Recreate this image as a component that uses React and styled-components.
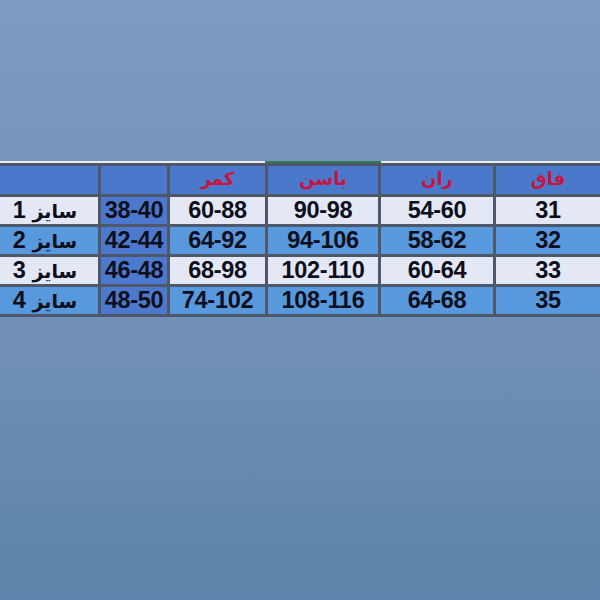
import React from 'react'
import styled, { createGlobalStyle } from 'styled-components'

const GlobalStyle = createGlobalStyle`
    html, body {
        margin: 0;
        padding: 0;
    }
    body {
        font-family: "Liberation Sans", "DejaVu Sans", Arial, sans-serif;
    }
`

const COLS = '98px 66px 95px 110px 112px 1fr'

const Page = styled.div`
    width: 600px;
    height: 600px;
    box-sizing: border-box;
    padding-top: 161px;
    background: linear-gradient(180deg, #7e9bc2 0%, #7593bb 45%, #5c83a9 100%);
    overflow: hidden;
`

const TopLine = styled.div`
    display: grid;
    grid-template-columns: ${COLS};
    column-gap: 3px;
    height: 2px;
    background-color: #e9eef6;
`

const TopSeg = styled.div`
    background-color: ${(p) => (p.$active ? '#2f7a57' : '#e9eef6')};
    margin: ${(p) => (p.$active ? '0 -3px' : '0')};
`

const Sheet = styled.div`
    display: grid;
    grid-template-columns: ${COLS};
    grid-template-rows: 28px repeat(4, 27px);
    gap: 3px;
    padding: 3px 0;
    background-color: #4f5868;
`

const HeadCell = styled.div`
    background-color: #4a78cb;
    display: flex;
    align-items: center;
    justify-content: center;
    color: #c8143f;
    font-family: "DejaVu Sans", sans-serif;
    font-size: 18px;
    font-weight: bold;
    padding-bottom: 3px;
`

const rowColors = {
    light: '#e4e8f4',
    blue: '#5898dc',
}

const Cell = styled.div`
    background-color: ${(p) => (p.$range ? '#4c79ce' : rowColors[p.$tone])};
    display: flex;
    align-items: center;
    justify-content: center;
    color: #0e0f1c;
    font-size: 23.5px;
    font-weight: bold;
    letter-spacing: -0.3px;
`

const SizeLabel = styled.span`
    direction: rtl;
    unicode-bidi: isolate;
    font-family: "DejaVu Sans", sans-serif;
    font-size: 19px;
    font-weight: bold;
    margin-left: -8px;

    b {
        font-family: "Liberation Sans", Arial, sans-serif;
        font-size: 23.5px;
    }
`

const headers = ['', '', 'كمر', 'باسن', 'ران', 'فاق']

const rows = [
    { size: 1, chest: '38-40', waist: '60-88', hip: '90-98', thigh: '54-60', leg: '31' },
    { size: 2, chest: '42-44', waist: '64-92', hip: '94-106', thigh: '58-62', leg: '32' },
    { size: 3, chest: '46-48', waist: '68-98', hip: '102-110', thigh: '60-64', leg: '33' },
    { size: 4, chest: '48-50', waist: '74-102', hip: '108-116', thigh: '64-68', leg: '35' },
]

export default function App() {
    return (
        <>
            <GlobalStyle />
            <Page>
                <TopLine>
                    {headers.map((h, i) => (
                        <TopSeg key={i} $active={i === 3} />
                    ))}
                </TopLine>
                <Sheet>
                    {headers.map((h, i) => (
                        <HeadCell key={'h' + i}>{h}</HeadCell>
                    ))}
                    {rows.map((r, i) => {
                        const tone = i % 2 === 0 ? 'light' : 'blue'
                        return (
                            <React.Fragment key={r.size}>
                                <Cell $tone={tone}>
                                    <SizeLabel>
                                        سایز <b>{r.size}</b>
                                    </SizeLabel>
                                </Cell>
                                <Cell $tone={tone} $range>{r.chest}</Cell>
                                <Cell $tone={tone}>{r.waist}</Cell>
                                <Cell $tone={tone}>{r.hip}</Cell>
                                <Cell $tone={tone}>{r.thigh}</Cell>
                                <Cell $tone={tone}>{r.leg}</Cell>
                            </React.Fragment>
                        )
                    })}
                </Sheet>
            </Page>
        </>
    )
}
